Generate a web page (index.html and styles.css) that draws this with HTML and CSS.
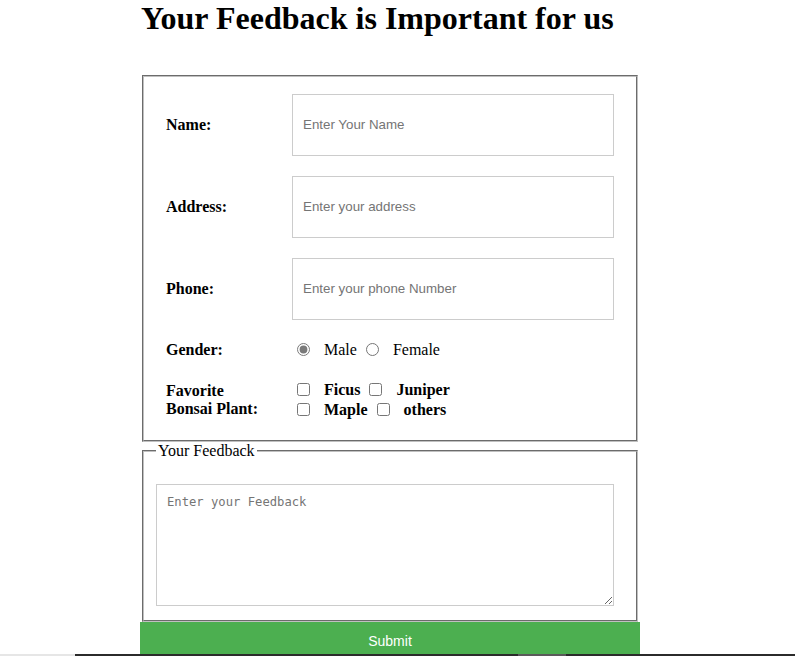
FILE: index.html
```html
<!DOCTYPE html>
<html lang="en">
<head>
    <meta charset="UTF-8">
    <meta name="viewport" content="width=device-width, initial-scale=1.0">
    <title>Feedback Form</title>
    <link rel="stylesheet" href="styles.css">
</head>
<body>
    <div class="container">
        <h1>Your Feedback is Important for us</h1>
        <form class="feedback-form">
            <fieldset class="details">
                <div class="form-grid">
                    <label class="field-label" for="name">Name:</label>
                    <input type="text" id="name" class="text-input" placeholder="Enter Your Name">

                    <label class="field-label" for="address">Address:</label>
                    <input type="text" id="address" class="text-input" placeholder="Enter your address">

                    <label class="field-label" for="phone">Phone:</label>
                    <input type="text" id="phone" class="text-input" placeholder="Enter your phone Number">

                    <span class="field-label">Gender:</span>
                    <div class="choices">
                        <input type="radio" name="gender" id="male" checked><label class="choice" for="male">Male</label>
                        <input type="radio" name="gender" id="female"><label class="choice" for="female">Female</label>
                    </div>

                    <span class="field-label plant-label">Favorite Bonsai Plant:</span>
                    <div class="choices bold">
                        <input type="checkbox" id="ficus"><label class="choice" for="ficus">Ficus</label>
                        <input type="checkbox" id="juniper"><label class="choice" for="juniper">Juniper</label><br>
                        <input type="checkbox" id="maple"><label class="choice" for="maple">Maple</label>
                        <input type="checkbox" id="others"><label class="choice" for="others">others</label>
                    </div>
                </div>
            </fieldset>
            <fieldset class="feedback">
                <legend>Your Feedback</legend>
                <textarea class="feedback-text" placeholder="Enter your Feedback"></textarea>
            </fieldset>
            <button type="submit" class="submit-btn">Submit</button>
        </form>
    </div>
    <div class="taskbar"><span class="taskbar-start"></span><span class="taskbar-item"></span></div>
</body>
</html>
```

FILE: styles.css
```css
body {
    margin: 0;
    font-family: 'Liberation Serif', 'Times New Roman', serif;
    font-size: 16px;
    color: #000;
    background: #fff;
}
.container {
    width: 500px;
    margin-left: 140px;
}
h1 {
    font-size: 32px;
    margin: 0 0 38px 1px;
    line-height: 37px;
}
fieldset {
    margin: 0 2px;
    border: 2px groove #c0c0c0;
    padding: 5.6px 12px 10px;
}
.form-grid {
    display: grid;
    grid-template-columns: 104px 1fr;
    column-gap: 22px;
    row-gap: 20px;
    align-items: center;
    padding: 11.4px 10px 10px;
}
.field-label {
    font-weight: bold;
}
.text-input {
    height: 62px;
    box-sizing: border-box;
    border: 1px solid #ccc;
    padding: 0 10px;
    font-family: 'Liberation Sans', Arial, sans-serif;
    font-size: 13.333px;
    width: 322px;
}
.text-input::placeholder {
    color: #757575;
}
.choices {
    line-height: 20px;
}
.choices.bold {
    font-weight: bold;
}
.choices input {
    margin: 3px 3px 0 5px;
    vertical-align: -1px;
    accent-color: #7a7a7a;
}
.choice {
    margin-left: 11px;
}
.feedback legend {
    padding: 0 2px;
}
.feedback-text {
    display: block;
    width: 458px;
    height: 122px;
    box-sizing: border-box;
    margin: 18px 0 4px;
    border: 1px solid #ccc;
    padding: 10px;
    font-family: 'DejaVu Sans Mono', monospace;
    font-size: 12.2px;
    resize: vertical;
}
.feedback-text::placeholder {
    color: #757575;
}
.submit-btn {
    display: block;
    width: 500px;
    background-color: #4CAF50;
    color: #fff;
    border: none;
    padding: 11px 20px;
    font-family: 'Liberation Sans', Arial, sans-serif;
    font-size: 14px;
    cursor: pointer;
}
.taskbar {
    position: fixed;
    left: 0;
    right: 0;
    bottom: 0;
    height: 2px;
    background: #2b2b2b;
    display: flex;
}
.taskbar-start {
    width: 75px;
    background: #e6e6e6;
}
.taskbar-item {
    width: 48px;
    margin-left: 443px;
    background: #5a5a5a;
}
```
